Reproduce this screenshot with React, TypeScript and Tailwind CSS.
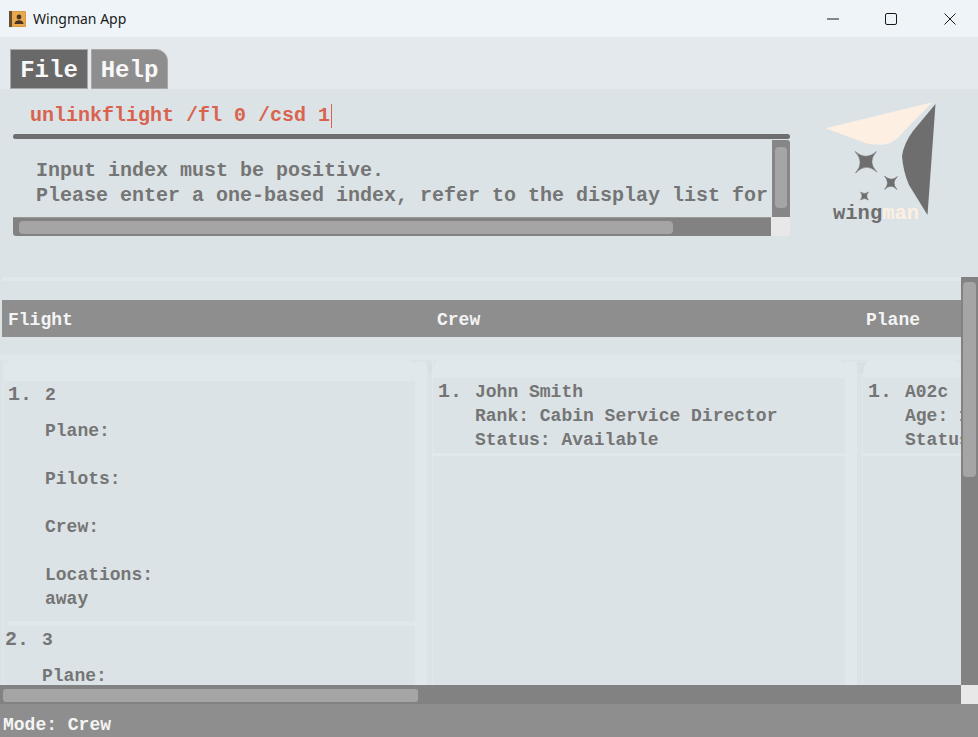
const mono = "font-['Liberation_Mono',monospace] font-bold";

function TitleBar() {
    return (
        <div className="flex h-[37px] shrink-0 items-center bg-[#eff4f9] pl-[8px]">
            <svg width="19" height="18" viewBox="0 0 19 18">
                <rect x="1" y="1" width="17" height="16" rx="1" fill="#d99a3e" />
                <rect x="1" y="1" width="3" height="16" fill="#6b4a2b" />
                <rect x="4" y="2" width="13" height="14" fill="#e5a94f" />
                <circle cx="11" cy="7" r="2.4" fill="#4a3420" />
                <path d="M6.5 14c.3-3 2.3-3.8 4.5-3.8s4.200.8 4.500 3.800z" fill="#4a3420" />
            </svg>
            <span className="ml-[6px] font-['Noto_Sans',sans-serif] text-[14px] text-[#1a1a1a]">Wingman App</span>
            <div className="ml-auto flex items-center">
                <svg width="12" height="12" viewBox="0 0 12 12" className="mr-[46px]">
                    <path d="M0 6h12" stroke="#1a1a1a" strokeWidth="1" />
                </svg>
                <svg width="12" height="12" viewBox="0 0 12 12" className="mr-[47px]">
                    <rect x="0.500" y="0.500" width="11" height="11" rx="1.500" fill="none" stroke="#1a1a1a" strokeWidth="1" />
                </svg>
                <svg width="12" height="12" viewBox="0 0 12 12" className="mr-[22px]">
                    <path d="M0.500 0.500l11 11M11.500 0.500l-11 11" stroke="#1a1a1a" strokeWidth="1" />
                </svg>
            </div>
        </div>
    );
}

function Tabs() {
    return (
        <div className="flex h-[52px] shrink-0 items-end gap-[3px] bg-[#e3e9ed] pl-[10px]">
            <div className={`flex h-[40px] w-[78px] items-center justify-center border border-[#a8a8a8] bg-[#696969] pt-[3px] text-[24px] text-[#f8f8f8] ${mono}`}>File</div>
            <div className={`flex h-[40px] w-[77px] items-center justify-center rounded-tr-[12px] border border-[#a8a8a8] bg-[#8e8e8e] pt-[3px] text-[24px] text-[#f8f8f8] ${mono}`}>Help</div>
        </div>
    );
}

function OutputBox() {
    return (
        <div className="ml-[13px] mt-[7px] w-[777px]">
            <div className="h-[5px] rounded-[3px] bg-[#6e6e6e]" />
            <div className="mt-[1px] flex h-[77px]">
                <div className={`min-w-0 flex-1 overflow-hidden whitespace-pre pl-[23px] pt-[18px] text-[20px] leading-[25px] text-[#757575] ${mono}`}>
                    <div>Input index must be positive.</div>
                    <div>Please enter a one-based index, refer to the display list for the correct index.</div>
                </div>
                <div className="w-[18px] shrink-0 rounded-tr-[3px] bg-[#868686] px-[3px] pt-[7px]">
                    <div className="h-[61px] rounded-[4px] bg-[#a5a5a5]" />
                </div>
            </div>
            <div className="flex h-[19px]">
                <div className="flex-1 rounded-bl-[3px] border-t border-[#9a9a9a] bg-[#828282] pl-[6px] pt-[3px]">
                    <div className="h-[13px] w-[654px] rounded-[4px] bg-[#a5a5a5]" />
                </div>
                <div className="w-[19px] shrink-0 rounded-br-[3px] bg-[#e8e8e8]" />
            </div>
        </div>
    );
}

function Logo() {
    return (
        <svg width="130" height="130" viewBox="815 95 130 130" className="ml-[25px] mt-[6px] shrink-0">
            <path d="M825.500 128.300L932.500 102.300L905 130Q895 143 885 144.500Q872 146 860 141Z" fill="#fdf0e2" />
            <path d="M935.500 104L927.500 215L909 185Q903 171 902 156Q904 143 913 131Z" fill="#6e6e6e" />
            <path d="M855 151.500Q866 161 876.500 151.500Q867 162 877 172Q866 162 855.500 173Q865 162 855 151.500Z" fill="#6e6e6e" stroke="#6e6e6e" strokeWidth="0.500" />
            <path d="M884.500 176Q891 182 897.500 176.500Q891 183 897 189.500Q891 183 884.500 189.500Q890.500 183 884.500 176Z" fill="#6e6e6e" stroke="#6e6e6e" strokeWidth="0.500" />
            <path d="M860.500 192Q864.300 195 868.500 192Q865 196 868.500 200Q864.300 197 860.500 200Q863.500 196 860.500 192Z" fill="#6e6e6e" stroke="#6e6e6e" strokeWidth="0.500" />
            <text x="833" y="219" fontFamily="'Liberation Mono', monospace" fontWeight="700" fontSize="20.500" fill="#6e6e6e">
                wing<tspan fill="#fdf0e2">man</tspan>
            </text>
        </svg>
    );
}

function CommandPanel() {
    return (
        <div className="flex h-[188px] shrink-0 bg-[#dbe3e6]">
            <div className="w-[790px] shrink-0">
                <div className={`flex h-[38px] items-center pl-[30px] pt-[16px] text-[20px] leading-[22px] text-[#d9634f] ${mono}`}>
                    unlinkflight /fl 0 /csd 1
                    <span className="ml-[1px] h-[24px] w-px shrink-0 bg-[#d9634f]" />
                </div>
                <OutputBox />
            </div>
            <Logo />
        </div>
    );
}

type Line = string;

const flightOne: Line[] = ["Plane:", "", "Pilots:", "", "Crew:", "", "Locations:", "away"];
const flightTwo: Line[] = ["Plane:", "", "Pilots:", "", "Crew:"];

function FlightCard({ index, name, lines, shift }: { index: number; name: string; lines: Line[]; shift: string }) {
    return (
        <div className="border-b-[5px] border-[#e0e8eb] pb-[10px] pt-[1px]">
            <div className={shift}>
                <div className={`flex h-[26px] items-center text-[#757575] ${mono}`}>
                    <span className="w-[37px] shrink-0 text-[20px]">{index}.</span>
                    <span className="text-[18px]">{name}</span>
                </div>
                <div className={`mt-[11px] pl-[37px] text-[18px] leading-[24px] text-[#757575] ${mono}`}>
                    {lines.map((line, i) => (
                        <div key={i} className="h-[24px]">{line}</div>
                    ))}
                </div>
            </div>
        </div>
    );
}

function PersonCard({ name, lines }: { name: string; lines: Line[] }) {
    return (
        <div className="border-b-[3px] border-[#e2e9ec] pb-[1px] pl-[5px] pt-[1px]">
            <div className={`flex text-[#757575] ${mono}`}>
                <span className="w-[37px] shrink-0 text-[20px] leading-[26px]">1.</span>
                <div className="whitespace-pre text-[18px] leading-[24px]">
                    <div className="h-[25px] leading-[26px]">{name}</div>
                    {lines.map((line) => (
                        <div key={line}>{line}</div>
                    ))}
                </div>
            </div>
        </div>
    );
}

function Column({ width, top, children }: { width: string; top: string; children: React.ReactNode }) {
    return (
        <div className={`relative flex shrink-0 ${width}`}>
            <div className="min-w-0 flex-1 overflow-hidden border-l border-[#e0e8eb]">
                <div className={`rounded-t-[8px] bg-[#e0e8eb] ${top}`} />
                {children}
            </div>
            <div className="mt-[2px] w-[12px] shrink-0 bg-[#e1e8eb]" />
            <div className="w-[5px] shrink-0" />
            {/* splitter handle */}
            <svg width="12" height="10" viewBox="0 0 12 10" className="absolute -right-[5px] top-[3px]">
                <path d="M0 0h12l-3.500 5v5h-5v-5z" fill="#d8e0e3" />
            </svg>
        </div>
    );
}

function Results() {
    return (
        <div className="flex min-h-0 flex-1 flex-col bg-[#dbe3e6]">
            <div className="flex min-h-0 flex-1">
                <div className="min-w-0 flex-1 overflow-hidden">
                    <div className="ml-[2px] h-[4px] bg-[#e1e8eb]" />
                    <div className={`mt-[19px] ml-[2px] flex h-[37px] items-center bg-[#8e8e8e] pt-[4px] text-[18px] text-[#f4f4f4] ${mono}`}>
                        <div className="w-[429px] shrink-0 pl-[6px]">Flight</div>
                        <div className="w-[430px] shrink-0 pl-[6px]">Crew</div>
                        <div className="pl-[5px]">Plane</div>
                    </div>
                    <div className="mt-[18px] flex h-[330px] border-t-[5px] border-[#dfe7ea] pl-[3px]">
                        <Column width="w-[429px]" top="h-[21px]">
                            <div className="pl-[4px]">
                                <FlightCard index={1} name="2" lines={flightOne} shift="" />
                                <FlightCard index={2} name="3" lines={flightTwo} shift="-ml-[3px]" />
                            </div>
                        </Column>
                        <Column width="w-[430px]" top="h-[18px]">
                            <PersonCard name="John Smith" lines={["Rank: Cabin Service Director", "Status: Available"]} />
                        </Column>
                        <div className="min-w-0 flex-1 overflow-hidden border-l border-[#e0e8eb]">
                            <div className="h-[18px] rounded-t-[8px] bg-[#e0e8eb]" />
                            <PersonCard name="A02c" lines={["Age: 1", "Status: Available"]} />
                        </div>
                    </div>
                </div>
                <div className="w-[17px] shrink-0 bg-[#828282] px-[2px] pt-[5px]">
                    <div className="h-[195px] rounded-[4px] bg-[#a5a5a5]" />
                </div>
            </div>
            <div className="flex h-[19px] shrink-0">
                <div className="flex-1 bg-[#828282] pl-[3px] pt-[4px]">
                    <div className="h-[13px] w-[415px] rounded-[3px] bg-[#a5a5a5]" />
                </div>
                <div className="w-[17px] shrink-0 bg-[#e8e8e8]" />
            </div>
        </div>
    );
}

export default function App() {
    return (
        <div className="flex h-[737px] w-[978px] flex-col overflow-hidden">
            <TitleBar />
            <Tabs />
            <CommandPanel />
            <Results />
            <div className={`flex h-[33px] shrink-0 items-center bg-[#8e8e8e] pl-[3px] pt-[8px] text-[18px] leading-[24px] text-[#f4f4f4] ${mono}`}>Mode: Crew</div>
        </div>
    );
}
